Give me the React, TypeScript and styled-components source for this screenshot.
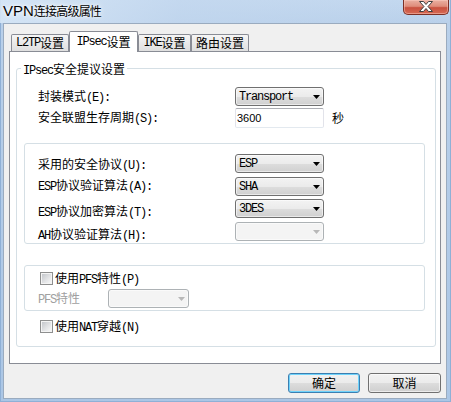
import React from "react";
import styled, { createGlobalStyle } from "styled-components";

const GlobalStyle = createGlobalStyle`
  html, body { margin: 0; padding: 0; }
  body { width: 451px; height: 402px; overflow: hidden; background: #b8cfe9; }
  *, *::before, *::after { box-sizing: border-box; }
`;

const CJK = `"Noto Sans CJK SC", "Noto Sans", sans-serif`;

const Latin = styled.span`
  font-family: "Liberation Mono", monospace;
  font-size: 12px;
  letter-spacing: -1.2px;
`;

const Txt: React.FC<{ s: string }> = ({ s }) => {
  const parts = s.split(/([\x20-\x7e]+)/).filter((p) => p.length > 0);
  return (
    <>
      {parts.map((p, i) =>
        /^[\x20-\x7e]+$/.test(p) ? (
          <Latin key={i}>{p}</Latin>
        ) : (
          <React.Fragment key={i}>{p}</React.Fragment>
        )
      )}
    </>
  );
};

const Window = styled.div`
  width: 451px;
  height: 402px;
  display: flex;
  flex-direction: column;
  background: linear-gradient(180deg, #c3d8ef 0px, #b9d0ea 23px, #abc6e5 100%);
  box-shadow: inset 1px 0 0 #8fb0d6, inset -1px 0 0 #8fb0d6, inset 0 -1px 0 #8fb0d6;
`;

const TitleBar = styled.div`
  height: 23px;
  display: flex;
  justify-content: space-between;
  align-items: flex-start;
  padding: 0 2px 0 3px;
  background: linear-gradient(90deg, rgba(214, 230, 246, 0.9) 0%, rgba(196, 216, 239, 0.6) 40%, rgba(176, 202, 232, 0) 100%);
`;

const Title = styled.div`
  font-family: ${CJK};
  font-size: 12px;
  line-height: 22px;
  letter-spacing: -0.8px;
  color: #000;
  text-shadow: 0 0 6px #fff, 0 0 3px #fff;
`;

const TitleLatin = styled.span`
  font-family: "Liberation Sans", sans-serif;
  font-size: 15px;
  letter-spacing: 0;
`;

const CloseBtn = styled.div`
  width: 46px;
  height: 15px;
  border: 1px solid #7c3026;
  border-top: none;
  border-radius: 0 0 5px 5px;
  background: linear-gradient(#eab0a2 0%, #df8d7b 45%, #c9513f 55%, #d66a55 100%);
  box-shadow: inset 0 0 0 1px rgba(255, 210, 200, 0.45);
  display: flex;
  justify-content: center;
  align-items: flex-start;
  padding-top: 1px;
`;

const Client = styled.div`
  flex: 1;
  margin: 0 4px 3px 3px;
  background: #f0f0f0;
  border: 1px solid #9aabbf;
  display: flex;
  flex-direction: column;
  padding: 7px 5px 5px 5px;
  font-family: ${CJK};
  font-size: 12px;
  line-height: 14px;
  color: #000;
`;

const TabStrip = styled.div`
  height: 20px;
  display: flex;
  align-items: flex-end;
  padding-left: 2px;
`;

const Tab = styled.div<{ $w: number; $active?: boolean }>`
  width: ${(p) => p.$w}px;
  height: ${(p) => (p.$active ? 21 : 17)}px;
  margin-bottom: ${(p) => (p.$active ? -1 : 0)}px;
  border: 1px solid #898c95;
  border-bottom: none;
  border-radius: 2px 2px 0 0;
  background: ${(p) => (p.$active ? "#ffffff" : "linear-gradient(#f6f6f6, #eaeaea 50%, #dfdfdf)")};
  display: flex;
  align-items: center;
  justify-content: center;
  position: relative;
  z-index: ${(p) => (p.$active ? 1 : 0)};
`;

const Panel = styled.div`
  height: 313px;
  border: 1px solid #898c95;
  background: #fff;
  padding: 16px 4px 0 6px;
`;

const Group = styled.div`
  position: relative;
  border: 1px solid #d5dfe5;
  border-radius: 3px;
`;

const OuterGroup = styled(Group)`
  width: 420px;
  display: flex;
  flex-direction: column;
  padding: 18px 0 13px 7px;
`;

const Legend = styled.span`
  position: absolute;
  top: -7px;
  left: 4px;
  padding: 0 2px;
  background: #fff;
  line-height: 14px;
`;

const FieldRow = styled.div<{ $h: number; $mt?: number }>`
  height: ${(p) => p.$h}px;
  margin-top: ${(p) => p.$mt ?? 0}px;
  margin-left: 14px;
  display: grid;
  grid-template-columns: 197px 89px auto;
  align-items: center;
`;

const ProtoGroup = styled(Group)`
  width: 401px;
  margin-top: 15px;
  padding-left: 13px;
  display: grid;
  grid-template-columns: 197px 89px;
`;

const Column = styled.div<{ $pt: number }>`
  display: flex;
  flex-direction: column;
  padding-top: ${(p) => p.$pt}px;
`;

const Label = styled.div<{ $mt?: number; $muted?: boolean }>`
  margin-top: ${(p) => p.$mt ?? 0}px;
  line-height: 14px;
  white-space: nowrap;
  color: ${(p) => (p.$muted ? "#a0a0a0" : "#000")};
`;

const Combo = styled.div<{ $w: number; $disabled?: boolean; $mt?: number }>`
  width: ${(p) => p.$w}px;
  height: 19px;
  margin-top: ${(p) => p.$mt ?? 0}px;
  border: 1px solid ${(p) => (p.$disabled ? "#adb2b5" : "#707070")};
  border-radius: 3px;
  background: ${(p) =>
    p.$disabled ? "#f4f4f4" : "linear-gradient(#f3f3f3 0%, #ebebeb 50%, #dddddd 51%, #d0d0d0 100%)"};
  box-shadow: inset 0 0 0 1px rgba(255, 255, 255, 0.55);
  display: flex;
  align-items: center;
  justify-content: space-between;
  padding: 0 3px 0 3px;
  line-height: 14px;
  color: ${(p) => (p.$disabled ? "#8a8a8a" : "#000")};
`;

const Arrow: React.FC<{ disabled?: boolean }> = ({ disabled }) => (
  <svg width="7" height="4" viewBox="0 0 7 4">
    <polygon points="0,0 7,0 3.5,4" fill={disabled ? "#b8b8b8" : "#000"} />
  </svg>
);

const TextInput = styled.div`
  width: 89px;
  height: 20px;
  border: 1px solid;
  border-color: #abadb3 #e2e3ea #e3e9ef #e2e3ea;
  border-radius: 2px;
  background: #fff;
  padding-left: 1px;
  display: flex;
  align-items: center;
  font-family: "Liberation Sans", sans-serif;
  font-size: 11px;
`;

const Unit = styled.span`
  margin-left: 8px;
`;

const PfsGroup = styled(Group)`
  width: 401px;
  margin-top: 21px;
  padding: 6px 0 2px 13px;
  display: flex;
  flex-direction: column;
`;

const CheckRow = styled.div<{ $ml: number; $mt?: number }>`
  height: 13px;
  margin-left: ${(p) => p.$ml}px;
  margin-top: ${(p) => p.$mt ?? 0}px;
  display: flex;
  align-items: center;
  gap: 2px;
  white-space: nowrap;
`;

const CheckBox = styled.span`
  width: 13px;
  height: 13px;
  border: 1px solid #8e8f8f;
  background: #f4f4f4;
  padding: 1px;
  display: inline-block;
  flex: none;
  &::after {
    content: "";
    display: block;
    width: 9px;
    height: 9px;
    background: linear-gradient(135deg, #c4c7cc 0%, #e4e5e7 60%, #f6f6f6 100%);
  }
`;

const PfsRow = styled.div`
  margin-top: 4px;
  display: grid;
  grid-template-columns: 70px 81px;
  align-items: center;
`;

const ButtonRow = styled.div`
  margin-top: 9px;
  display: flex;
  justify-content: flex-end;
  gap: 8px;
`;

const Button = styled.div<{ $w: number; $default?: boolean }>`
  width: ${(p) => p.$w}px;
  height: 20px;
  border: 1px solid ${(p) => (p.$default ? "#3c7fb1" : "#707070")};
  border-radius: 3px;
  background: linear-gradient(#f2f2f2 0%, #ebebeb 50%, #dddddd 51%, #cfcfcf 100%);
  box-shadow: inset 0 0 0 1px ${(p) => (p.$default ? "#6fd3fb" : "rgba(255,255,255,0.6)")};
  display: flex;
  align-items: center;
  justify-content: center;
  font-size: 12px;
`;

export default function App() {
  return (
    <>
      <GlobalStyle />
      <Window>
        <TitleBar>
          <Title>
            <TitleLatin>VPN</TitleLatin>连接高级属性
          </Title>
          <CloseBtn>
            <svg width="14" height="11" viewBox="-0.5 -0.5 14 11">
              <path
                d="M0,0 H4 L6.5,3 L9,0 H13 L8.5,5 L13,10 H9 L6.5,7 L4,10 H0 L4.5,5 Z"
                fill="#fff"
                stroke="#404040"
                strokeWidth="1"
                strokeLinejoin="round"
              />
            </svg>
          </CloseBtn>
        </TitleBar>
        <Client>
          <TabStrip>
            <Tab $w={58}>
              <Txt s="L2TP设置" />
            </Tab>
            <Tab $w={69} $active>
              <Txt s="IPsec设置" />
            </Tab>
            <Tab $w={53}>
              <Txt s="IKE设置" />
            </Tab>
            <Tab $w={58}>路由设置</Tab>
          </TabStrip>
          <Panel>
            <OuterGroup>
              <Legend>
                <Txt s="IPsec安全提议设置" />
              </Legend>
              <FieldRow $h={19}>
                <Label>
                  <Txt s="封装模式(E):" />
                </Label>
                <Combo $w={89}>
                  <Txt s="Transport" />
                  <Arrow />
                </Combo>
              </FieldRow>
              <FieldRow $h={20} $mt={2}>
                <Label>
                  <Txt s="安全联盟生存周期(S):" />
                </Label>
                <TextInput>3600</TextInput>
                <Unit>秒</Unit>
              </FieldRow>
              <ProtoGroup>
                <Column $pt={13}>
                  <Label>
                    <Txt s="采用的安全协议(U):" />
                  </Label>
                  <Label $mt={5}>
                    <Txt s="ESP协议验证算法(A):" />
                  </Label>
                  <Label $mt={10}>
                    <Txt s="ESP协议加密算法(T):" />
                  </Label>
                  <Label $mt={7}>
                    <Txt s="AH协议验证算法(H):" />
                  </Label>
                </Column>
                <Column $pt={10}>
                  <Combo $w={89}>
                    <Txt s="ESP" />
                    <Arrow />
                  </Combo>
                  <Combo $w={89} $mt={4}>
                    <Txt s="SHA" />
                    <Arrow />
                  </Combo>
                  <Combo $w={89} $mt={3}>
                    <Txt s="3DES" />
                    <Arrow />
                  </Combo>
                  <Combo $w={89} $mt={4} $disabled>
                    <span />
                    <Arrow disabled />
                  </Combo>
                </Column>
              </ProtoGroup>
              <PfsGroup>
                <CheckRow $ml={2}>
                  <CheckBox />
                  <span>
                    <Txt s="使用PFS特性(P)" />
                  </span>
                </CheckRow>
                <PfsRow>
                  <Label $muted>
                    <Txt s="PFS特性" />
                  </Label>
                  <Combo $w={81} $disabled>
                    <span />
                    <Arrow disabled />
                  </Combo>
                </PfsRow>
              </PfsGroup>
              <CheckRow $ml={16} $mt={9}>
                <CheckBox />
                <span>
                  <Txt s="使用NAT穿越(N)" />
                </span>
              </CheckRow>
            </OuterGroup>
          </Panel>
          <ButtonRow>
            <Button $w={72} $default>
              确定
            </Button>
            <Button $w={73}>取消</Button>
          </ButtonRow>
        </Client>
      </Window>
    </>
  );
}
